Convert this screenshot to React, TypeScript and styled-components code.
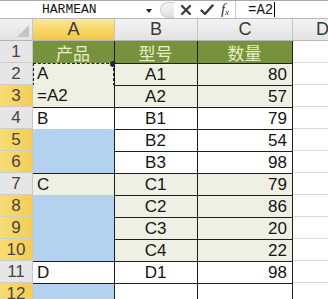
import styled, { createGlobalStyle, css } from "styled-components";

const Global = createGlobalStyle`
    html, body {
        margin: 0;
        padding: 0;
        background: #ffffff;
        overflow: hidden;
    }
    body {
        font-family: "Liberation Sans", Arial, sans-serif;
    }
`;

const Page = styled.div`
    width: 328px;
    height: 299px;
    overflow: hidden;
    display: flex;
    flex-direction: column;
    background: #ffffff;
`;

const TopStrip = styled.div`
    height: 4px;
    background: linear-gradient(#e6e6e6, #cfcfcf);
    border-bottom: 1px solid #a9a9a9;
`;

const FormulaBar = styled.div`
    height: 20px;
    display: flex;
    align-items: stretch;
    background: #ffffff;
    border-bottom: 1px solid #b8b8b8;
`;

const NameBox = styled.div`
    width: 158px;
    display: flex;
    align-items: center;
    position: relative;
    font-family: "Liberation Mono", "DejaVu Sans Mono", monospace;
    font-size: 13px;
    color: #111;
    padding-left: 42px;
    box-sizing: border-box;
`;

const DropArrow = styled.span`
    position: absolute;
    left: 146px;
    top: 8px;
    width: 0;
    height: 0;
    border-left: 3px solid transparent;
    border-right: 3px solid transparent;
    border-top: 4px solid #222;
`;

const ButtonArea = styled.div`
    width: 78px;
    display: flex;
    align-items: center;
    gap: 0;
    border-right: 1px solid #c9c9c9;
    box-sizing: border-box;
`;

const Knob = styled.span`
    width: 14px;
    height: 16px;
    margin-left: 2px;
    border-radius: 8px 0 0 8px;
    border: 1px solid #d0d0d0;
    border-right: none;
    background: linear-gradient(#f4f4f4, #e0e0e0);
    box-sizing: border-box;
`;

const IconSlot = styled.span<{ $w: number }>`
    width: ${(p) => p.$w}px;
    display: flex;
    align-items: center;
    justify-content: center;
`;

const Fx = styled.span`
    font-family: "Liberation Serif", "DejaVu Serif", serif;
    font-style: italic;
    font-size: 15px;
    color: #333;
    sub {
        font-size: 9px;
        vertical-align: -1px;
    }
`;

const FormulaText = styled.div`
    flex: 1;
    display: flex;
    align-items: center;
    padding-left: 12px;
    font-family: "Liberation Mono", "DejaVu Sans Mono", monospace;
    font-size: 14px;
    color: #111;
`;

const Caret = styled.span`
    width: 1px;
    height: 15px;
    background: #000;
    margin-left: 1px;
`;

const Gap = styled.div`
    height: 3px;
    background: #e8e8e8;
`;

const Sheet = styled.div`
    display: grid;
    grid-template-columns: 33px 82px 83px 95px 60px;
    grid-template-rows: 22px;
    grid-auto-rows: 22px;
`;

const Corner = styled.div`
    background: linear-gradient(#f3f3f3, #e2e2e2);
    border-right: 1px solid #c6c6c6;
    border-bottom: 1px solid #b5b5b5;
    box-sizing: border-box;
    position: relative;
    &::after {
        content: "";
        position: absolute;
        right: 3px;
        bottom: 3px;
        border-left: 12px solid transparent;
        border-bottom: 12px solid #c4c4c4;
    }
`;

const ColHead = styled.div<{ $active?: boolean }>`
    display: flex;
    align-items: center;
    justify-content: center;
    font-size: 18px;
    color: #3a3a3a;
    box-sizing: border-box;
    border-right: 1px solid #c6c6c6;
    border-bottom: 1px solid #b5b5b5;
    background: ${(p) =>
        p.$active
            ? "linear-gradient(#fbe7a0 0%, #f8d96a 45%, #f3c64a 100%)"
            : "linear-gradient(#f3f3f3, #e3e3e3)"};
`;

const RowHead = styled.div<{ $active?: boolean }>`
    display: flex;
    align-items: center;
    justify-content: center;
    font-size: 17px;
    color: #444;
    box-sizing: border-box;
    border-right: 1px solid #c6c6c6;
    border-bottom: 1px solid #cdcdcd;
    background: ${(p) =>
        p.$active ? "linear-gradient(90deg, #f8dc74, #f4cd55)" : "#e6e6e6"};
`;

type Tone = "head" | "band" | "plain" | "sel";

const toneBg: Record<Tone, string> = {
    head: "#76923c",
    band: "#eef0e3",
    plain: "#ffffff",
    sel: "#b3d2ef",
};

const Cell = styled.div<{
    $tone: Tone;
    $align?: "left" | "center" | "right";
    $top?: boolean;
}>`
    position: relative;
    display: flex;
    align-items: center;
    box-sizing: border-box;
    font-size: 17px;
    color: #151515;
    padding: 0 5px 0 4px;
    background: ${(p) => toneBg[p.$tone]};
    border-right: 1px solid #1e1e1e;
    justify-content: ${(p) =>
        p.$align === "center" ? "center" : p.$align === "right" ? "flex-end" : "flex-start"};
    ${(p) =>
        p.$top &&
        css`
            border-top: 1px solid #1e1e1e;
        `}
    ${(p) =>
        p.$tone === "head" &&
        css`
            font-family: "Noto Sans CJK SC", sans-serif;
            color: #e9efc4;
            font-size: 17px;
        `}
`;

const EmptyCell = styled.div`
    box-sizing: border-box;
    border-bottom: 1px solid #dadada;
`;

const Ants = styled.div`
    position: absolute;
    inset: 0 0 -1px 0;
    border: 1px dashed #1a1a3a;
    pointer-events: none;
`;

const Handle = styled.span`
    position: absolute;
    right: -3px;
    top: -3px;
    width: 6px;
    height: 6px;
    border-radius: 50%;
    background: #1c2452;
`;

interface IRow {
    n: number;
    a: string;
    b: string;
    c: string;
    tone: Tone;
    aTone: Tone;
    groupStart?: boolean;
    rowSel?: boolean;
}

const rows: IRow[] = [
    { n: 2, a: "A", b: "A1", c: "80", tone: "band", aTone: "band", groupStart: true },
    { n: 3, a: "=A2", b: "A2", c: "57", tone: "band", aTone: "band", rowSel: true },
    { n: 4, a: "B", b: "B1", c: "79", tone: "plain", aTone: "plain", groupStart: true },
    { n: 5, a: "", b: "B2", c: "54", tone: "plain", aTone: "sel", rowSel: true },
    { n: 6, a: "", b: "B3", c: "98", tone: "plain", aTone: "sel", rowSel: true },
    { n: 7, a: "C", b: "C1", c: "79", tone: "band", aTone: "band", groupStart: true },
    { n: 8, a: "", b: "C2", c: "86", tone: "band", aTone: "sel", rowSel: true },
    { n: 9, a: "", b: "C3", c: "20", tone: "band", aTone: "sel", rowSel: true },
    { n: 10, a: "", b: "C4", c: "22", tone: "band", aTone: "sel", rowSel: true },
    { n: 11, a: "D", b: "D1", c: "98", tone: "plain", aTone: "plain", groupStart: true },
    { n: 12, a: "", b: "", c: "", tone: "plain", aTone: "sel", rowSel: true, groupStart: true },
];

function CrossIcon() {
    return (
        <svg width="12" height="12" viewBox="0 0 12 12">
            <path d="M2 2 L10 10 M10 2 L2 10" stroke="#3a3a3a" strokeWidth="2.2" strokeLinecap="round" />
        </svg>
    );
}

function CheckIcon() {
    return (
        <svg width="14" height="12" viewBox="0 0 14 12">
            <path d="M1.5 6.5 L5 10 L12.5 1.5" stroke="#3a3a3a" strokeWidth="2.4" fill="none" strokeLinecap="round" strokeLinejoin="round" />
        </svg>
    );
}

function App() {
    return (
        <Page>
            <Global />
            <TopStrip />
            <FormulaBar>
                <NameBox>
                    HARMEAN
                    <DropArrow />
                </NameBox>
                <ButtonArea>
                    <Knob />
                    <IconSlot $w={24}>
                        <CrossIcon />
                    </IconSlot>
                    <IconSlot $w={18}>
                        <CheckIcon />
                    </IconSlot>
                    <IconSlot $w={18}>
                        <Fx>
                            f<sub>x</sub>
                        </Fx>
                    </IconSlot>
                </ButtonArea>
                <FormulaText>
                    =A2
                    <Caret />
                </FormulaText>
            </FormulaBar>
            <Gap />
            <Sheet>
                <Corner />
                <ColHead $active>A</ColHead>
                <ColHead>B</ColHead>
                <ColHead>C</ColHead>
                <ColHead>D</ColHead>

                <RowHead>1</RowHead>
                <Cell $tone="head" $align="center">产品</Cell>
                <Cell $tone="head" $align="center">型号</Cell>
                <Cell $tone="head" $align="center">数量</Cell>
                <EmptyCell />

                {rows.map((r) => (
                    <>
                        <RowHead key={`h${r.n}`} $active={r.rowSel}>
                            {r.n}
                        </RowHead>
                        <Cell key={`a${r.n}`} $tone={r.aTone} $top={r.groupStart && r.n !== 2}>
                            {r.a}
                            {r.n === 2 && (
                                <Ants>
                                    <Handle />
                                </Ants>
                            )}
                        </Cell>
                        <Cell key={`b${r.n}`} $tone={r.tone} $align="center" $top>
                            {r.b}
                        </Cell>
                        <Cell key={`c${r.n}`} $tone={r.tone} $align="right" $top>
                            {r.c}
                        </Cell>
                        <EmptyCell key={`d${r.n}`} />
                    </>
                ))}
            </Sheet>
        </Page>
    );
}

export default App;
